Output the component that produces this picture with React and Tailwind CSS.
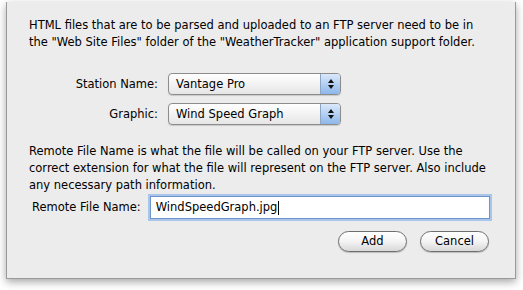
const Popup = ({ value }) => (
    <div className="flex h-[22px] w-[173px] items-stretch overflow-hidden rounded-[4px] border border-[#8c8c8c] bg-gradient-to-b from-white to-[#e6e6e6] shadow-[0_1px_1px_rgba(0,0,0,0.15)]">
        <span className="flex-1 pl-[7px] leading-[20px]">{value}</span>
        <span className="flex w-[20px] flex-col items-center justify-center gap-[2px] border-l border-[#8ca6c8] bg-gradient-to-b from-[#dbe9fa] to-[#8db7ea]">
            <svg width="6" height="4" viewBox="0 0 6 4"><path d="M3 0L6 4H0z" fill="#111" /></svg>
            <svg width="6" height="4" viewBox="0 0 6 4"><path d="M0 0h6L3 4z" fill="#111" /></svg>
        </span>
    </div>
);

const PillButton = ({ children }) => (
    <button className="h-[21px] w-[69px] rounded-full border border-[#6e6e6e] bg-gradient-to-b from-white via-[#f4f4f4] to-[#d8d8d8] leading-[19px] text-black shadow-[0_1px_1px_rgba(0,0,0,0.2)]">
        {children}
    </button>
);

const App = () => {
    return (
        <div className="h-[290px] w-[523px] bg-white pt-[2px] pl-[6px] font-['DejaVu_Sans',sans-serif] text-[11.5px] leading-[17px] text-black">
            <div className="flex h-[277px] w-[510px] flex-col border border-t-0 border-[#9a9a9a] bg-[#ececec] pl-[22px] pr-[20px] shadow-[0_3px_8px_rgba(0,0,0,0.35)]">
                {/* Intro */}
                <p className="mt-[15px]">
                    HTML files that are to be parsed and uploaded to an FTP server need to be in the "Web Site Files" folder of the "WeatherTracker" application support folder.
                </p>

                {/* Station / graphic */}
                <div className="mt-[22px] grid grid-cols-[129px_auto] items-center gap-x-[10px] gap-y-[8px]">
                    <span className="text-right">Station Name:</span>
                    <Popup value="Vantage Pro" />
                    <span className="text-right">Graphic:</span>
                    <Popup value="Wind Speed Graph" />
                </div>

                {/* Remote file name */}
                <p className="mt-[18px]">
                    Remote File Name is what the file will be called on your FTP server. Use the correct extension for what the file will represent on the FTP server. Also include any necessary path information.
                </p>

                <div className="mt-[2px] flex items-center gap-[9px] pl-[3px]">
                    <span>Remote File Name:</span>
                    <div className="flex h-[23px] w-[340px] items-center border border-[#6f94c8] bg-white pl-[5px] shadow-[0_0_0_2px_#a9c6ea]">
                        <span>WindSpeedGraph.jpg</span>
                        <span className="ml-[1px] h-[14px] w-px bg-black" />
                    </div>
                </div>

                <div className="mt-[12px] flex justify-end gap-[13px] pr-[6px]">
                    <PillButton>Add</PillButton>
                    <PillButton>Cancel</PillButton>
                </div>
            </div>
        </div>
    );
};

export default App;
